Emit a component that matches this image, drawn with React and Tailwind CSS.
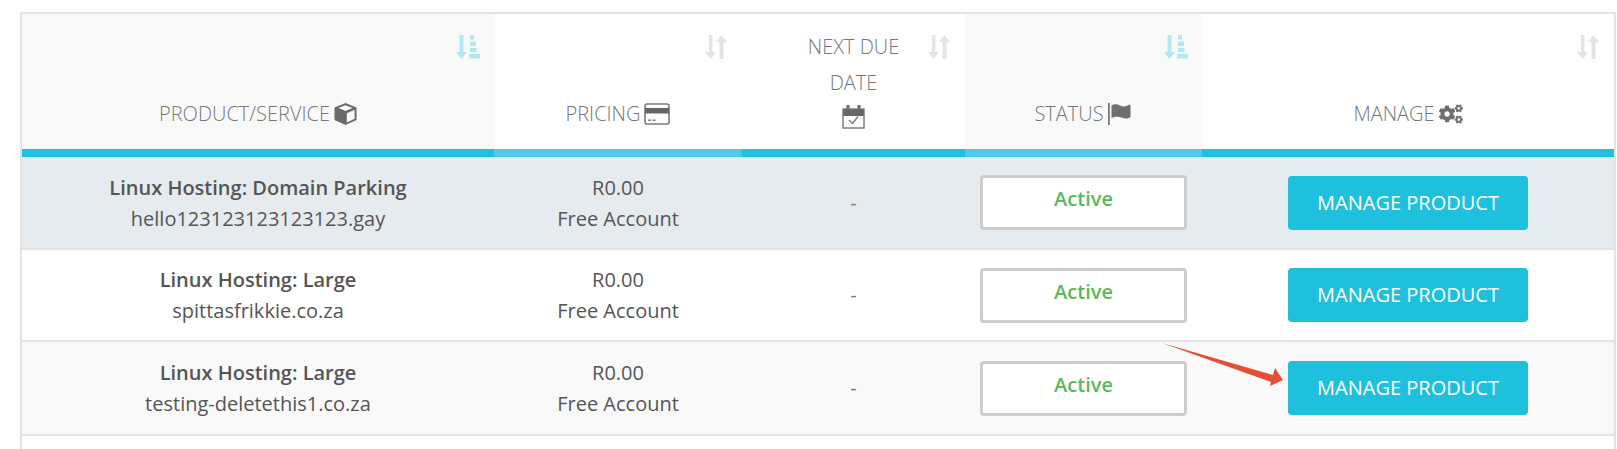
import { FaCogs } from "react-icons/fa";

const font = { fontFamily: '"Open Sans", sans-serif' };

const rows = [
  { name: "Linux Hosting: Domain Parking", domain: "hello123123123123123.gay", bg: "bg-[#e6ebef]", h: "h-[93px]", pt: "pt-[17px]" },
  { name: "Linux Hosting: Large", domain: "spittasfrikkie.co.za", bg: "bg-white", h: "h-[92px]", pt: "pt-[18px]" },
  { name: "Linux Hosting: Large", domain: "testing-deletethis1.co.za", bg: "bg-[#f9f9f9]", h: "h-[94px]", pt: "pt-[18px]" },
];

function SortActive() {
  return (
    <svg width="24" height="24" viewBox="0 0 24 24" className="absolute top-[21px] right-[14px]" fill="#b3e8f3">
      <path d="M3.5 0h4v17h3.5L5.5 24 0 17h3.5z" />
      <rect x="14" y="0" width="4" height="4.5" />
      <rect x="14" y="6.5" width="6" height="4.5" />
      <rect x="14" y="13" width="6.5" height="4" />
      <rect x="13" y="19" width="11" height="4.5" />
    </svg>
  );
}

function SortIdle() {
  return (
    <svg width="22" height="24" viewBox="0 0 22 24" className="absolute top-[21px] right-[15px]" fill="#e3e5e5">
      <path d="M4 0h3.5v17H11l-5.2 7L0 17h4z" />
      <path d="M14.5 24V7H11l5.3-7L22 7h-3.5v17z" />
    </svg>
  );
}

function CubeIcon() {
  return (
    <svg width="23" height="22" viewBox="0 0 23 22" className="shrink-0">
      <path d="M11.5 0 22.5 4.5v12.5L11.5 22 .5 17V4.5z" fill="#6a6a6a" />
      <path d="M12.8 10.2 20.6 6.8v9L12.8 19.4z" fill="#f9f9f9" />
      <path d="M11.5 2.3 18.5 5 11.5 8 4.5 5z" fill="#f9f9f9" />
    </svg>
  );
}

function CardIcon() {
  return (
    <svg width="26" height="22" viewBox="0 0 26 22" className="shrink-0">
      <rect x="1" y="1" width="24" height="20" rx="2" fill="#fff" stroke="#7a7a7a" strokeWidth="1.6" />
      <rect x="1" y="5" width="24" height="5.5" fill="#666" />
      <rect x="4" y="16.5" width="3" height="1.4" fill="#777" />
      <rect x="8.5" y="16.5" width="3" height="1.4" fill="#777" />
    </svg>
  );
}

function CalendarIcon() {
  return (
    <svg width="23" height="24" viewBox="0 0 23 24" className="shrink-0">
      <path d="M1 4h21v7H1z" fill="#666" />
      <rect x="4.5" y="0" width="3" height="6" fill="#666" />
      <rect x="15.5" y="0" width="3" height="6" fill="#666" />
      <rect x="1" y="4" width="21" height="19" fill="none" stroke="#777" strokeWidth="1.4" />
      <path d="M7 15l3.5 3.5L16 11.5" fill="none" stroke="#777" strokeWidth="1.3" />
    </svg>
  );
}

function FlagIcon() {
  return (
    <svg width="25" height="24" viewBox="0 0 25 24" className="shrink-0">
      <rect x="0" y="1" width="1.8" height="22" fill="#777" />
      <path d="M3.5 3.5c3-2 6-1 8.500 0s5 1.500 8.500-.5c1-.5 2 0 2 1v11c-3.500 2.500-6.500 1.500-9 .5s-6-1.500-10 .5z" fill="#6f6f6f" />
    </svg>
  );
}

function HeadCell({ shaded, sorted, width, children }) {
  return (
    <th className={`relative align-bottom p-0 pb-[20px] font-light text-[#777] ${width} ${shaded ? "bg-[#f9f9f9]" : "bg-white"}`}>
      {sorted ? <SortActive /> : <SortIdle />}
      {children}
    </th>
  );
}

function Bar({ light }) {
  return <td className={`h-[8px] p-0 ${light ? "bg-[#4dcbe6]" : "bg-[#1fbfde]"}`}></td>;
}

export default function App() {
  return (
    <div className="h-[449px] overflow-hidden bg-white pl-[20px] pt-[12px]" style={font}>
      <table className="w-[1596px] table-fixed border-separate border-spacing-0 border-l-2 border-r-2 border-t-2 border-[#e2e2e2] text-center text-[20px]">
        <thead>
          <tr className="h-[135px]">
            <HeadCell shaded sorted width="w-[472px]">
              <span className="flex items-center justify-center gap-[4px]">PRODUCT/SERVICE <CubeIcon /></span>
            </HeadCell>
            <HeadCell width="w-[248px]">
              <span className="flex items-center justify-center gap-[4px]">PRICING <CardIcon /></span>
            </HeadCell>
            <HeadCell width="w-[223px]">
              <span className="block leading-[36px]">NEXT DUE</span>
              <span className="block leading-[36px]">DATE</span>
              <span className="flex justify-center pt-[4px]"><CalendarIcon /></span>
            </HeadCell>
            <HeadCell shaded sorted width="w-[237px]">
              <span className="flex items-center justify-center gap-[4px]">STATUS <FlagIcon /></span>
            </HeadCell>
            <HeadCell width="w-[412px]">
              <span className="flex items-center justify-center gap-[4px]">MANAGE <FaCogs className="text-[24px] text-[#6f6f6f]" /></span>
            </HeadCell>
          </tr>
          <tr>
            <Bar />
            <Bar light />
            <Bar />
            <Bar light />
            <Bar />
          </tr>
        </thead>
        <tbody className="text-[#555]">
          {rows.map((r) => (
            <tr key={r.domain} className={`${r.bg} ${r.h}`}>
              <td className="border-b-2 border-[#e2e2e2] p-0 leading-[31px]">
                <div className="font-semibold">{r.name}</div>
                <div>{r.domain}</div>
              </td>
              <td className="border-b-2 border-[#e2e2e2] p-0 leading-[31px]">
                <div>R0.00</div>
                <div>Free Account</div>
              </td>
              <td className="border-b-2 border-[#e2e2e2] p-0 text-[#777]">-</td>
              <td className="border-b-2 border-[#e2e2e2] p-0">
                <div className="mx-auto flex h-[55px] w-[207px] justify-center rounded-[4px] border-[3px] border-[#cccccc] bg-white pt-[6px] font-semibold text-[#5cb85c]">
                  Active
                </div>
              </td>
              <td className="border-b-2 border-[#e2e2e2] p-0">
                <button className="ml-[86px] flex h-[54px] w-[240px] items-center justify-center rounded-[4px] bg-[#1fbfde] text-white">
                  MANAGE PRODUCT
                </button>
              </td>
            </tr>
          ))}
          <tr className="h-[20px]"><td colSpan={5}></td></tr>
        </tbody>
      </table>
      <svg className="pointer-events-none absolute left-[1160px] top-[340px]" width="130" height="50" viewBox="0 0 130 50">
        <path d="M2 3 113 35 115 28 123 40 110 46 111 42z" fill="#e74c35" />
      </svg>
    </div>
  );
}
